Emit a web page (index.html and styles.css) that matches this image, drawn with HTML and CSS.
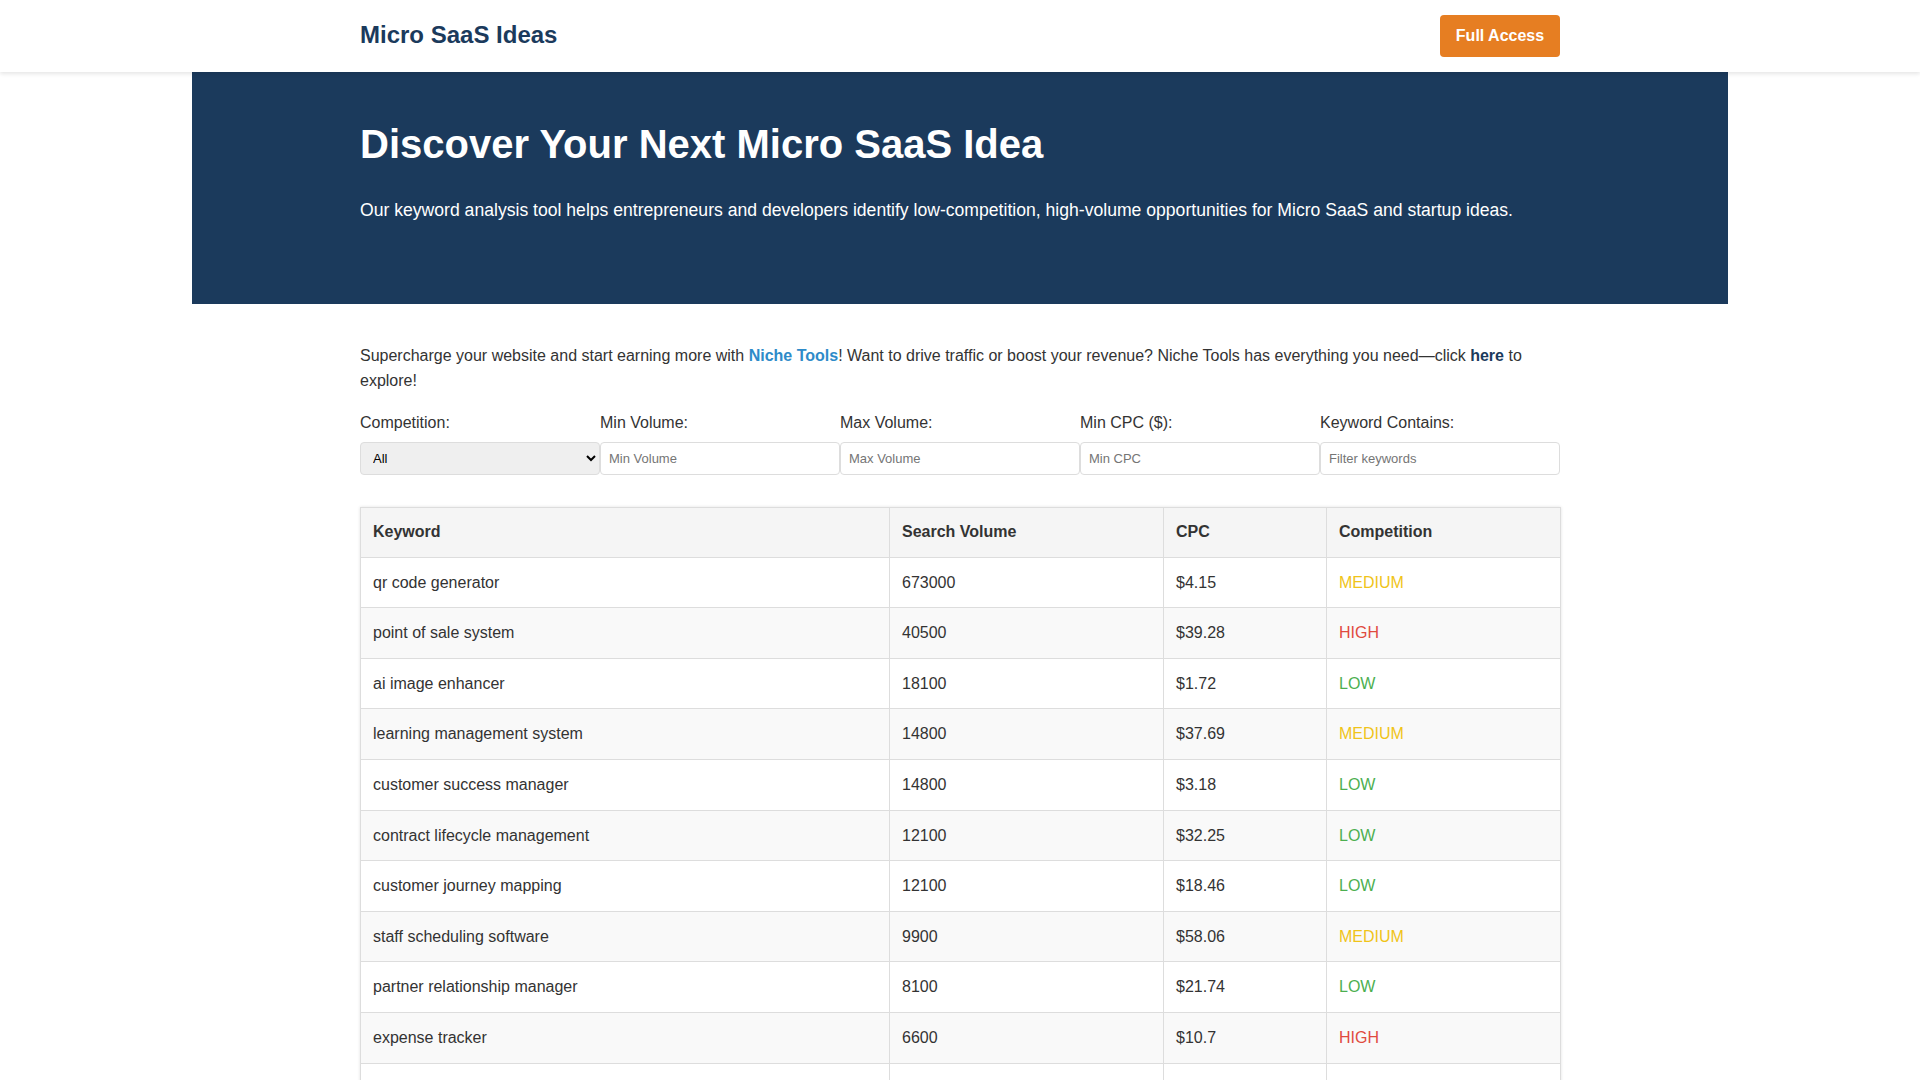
FILE: index.html
```html
<!DOCTYPE html>
<html lang="en">
<head>
<meta charset="utf-8">
<title>Micro SaaS Ideas</title>
<link rel="stylesheet" href="styles.css">
</head>
<body>
<header class="site-header">
  <div class="container header-inner">
    <div class="logo">Micro SaaS Ideas</div>
    <a class="btn-access" href="#">Full Access</a>
  </div>
</header>
<section class="hero">
  <div class="container">
    <h1 class="hero-title">Discover Your Next Micro SaaS Idea</h1>
    <p class="hero-text">Our keyword analysis tool helps entrepreneurs and developers identify low-competition, high-volume opportunities for Micro SaaS and startup ideas.</p>
  </div>
</section>
<main class="container main">
  <p class="promo">Supercharge your website and start earning more with <a class="link-niche" href="#">Niche Tools</a>! Want to drive traffic or boost your revenue? Niche Tools has everything you need—click <a class="link-here" href="#">here</a> to explore!</p>
  <div class="filters">
    <div class="filter">
      <label class="filter-label">Competition:</label>
      <select class="filter-control filter-select"><option>All</option></select>
    </div>
    <div class="filter">
      <label class="filter-label">Min Volume:</label>
      <input class="filter-control" type="text" placeholder="Min Volume">
    </div>
    <div class="filter">
      <label class="filter-label">Max Volume:</label>
      <input class="filter-control" type="text" placeholder="Max Volume">
    </div>
    <div class="filter">
      <label class="filter-label">Min CPC ($):</label>
      <input class="filter-control" type="text" placeholder="Min CPC">
    </div>
    <div class="filter">
      <label class="filter-label">Keyword Contains:</label>
      <input class="filter-control" type="text" placeholder="Filter keywords">
    </div>
  </div>
  <table class="kw-table">
    <colgroup>
      <col class="col-kw"><col class="col-vol"><col class="col-cpc"><col class="col-comp">
    </colgroup>
    <thead>
      <tr><th>Keyword</th><th>Search Volume</th><th>CPC</th><th>Competition</th></tr>
    </thead>
    <tbody>
      <tr><td>qr code generator</td><td>673000</td><td>$4.15</td><td class="medium">MEDIUM</td></tr>
      <tr><td>point of sale system</td><td>40500</td><td>$39.28</td><td class="high">HIGH</td></tr>
      <tr><td>ai image enhancer</td><td>18100</td><td>$1.72</td><td class="low">LOW</td></tr>
      <tr><td>learning management system</td><td>14800</td><td>$37.69</td><td class="medium">MEDIUM</td></tr>
      <tr><td>customer success manager</td><td>14800</td><td>$3.18</td><td class="low">LOW</td></tr>
      <tr><td>contract lifecycle management</td><td>12100</td><td>$32.25</td><td class="low">LOW</td></tr>
      <tr><td>customer journey mapping</td><td>12100</td><td>$18.46</td><td class="low">LOW</td></tr>
      <tr><td>staff scheduling software</td><td>9900</td><td>$58.06</td><td class="medium">MEDIUM</td></tr>
      <tr><td>partner relationship manager</td><td>8100</td><td>$21.74</td><td class="low">LOW</td></tr>
      <tr><td>expense tracker</td><td>6600</td><td>$10.7</td><td class="high">HIGH</td></tr>
      <tr><td>employee onboarding software</td><td>5400</td><td>$14.92</td><td class="low">LOW</td></tr>
      <tr><td>invoice generator</td><td>4400</td><td>$6.35</td><td class="medium">MEDIUM</td></tr>
    </tbody>
  </table>
</main>
</body>
</html>
```

FILE: styles.css
```css
* {
  box-sizing: border-box;
}

body {
  margin: 0;
  font-family: "Liberation Sans", Arial, Helvetica, sans-serif;
  color: #333;
  background: #fff;
}

.container {
  width: 1200px;
  margin: 0 auto;
}

.site-header {
  background: #fff;
  padding: 15px 0;
  box-shadow: 0 2px 4px rgba(0, 0, 0, 0.1);
  position: relative;
  z-index: 1;
}

.header-inner {
  display: flex;
  align-items: center;
  justify-content: space-between;
}

.logo {
  font-size: 24px;
  line-height: 28px;
  font-weight: bold;
  color: #1b3a5c;
  margin-top: -2px;
}

.btn-access {
  display: block;
  width: 120px;
  height: 42px;
  line-height: 42px;
  text-align: center;
  background: #e67e22;
  color: #fff;
  font-weight: bold;
  font-size: 16px;
  text-decoration: none;
  border-radius: 4px;
}

.hero {
  width: 1536px;
  margin: 0 auto;
  background: #1b3a5c;
  color: #fff;
  padding: 49px 0 84px;
}

.hero-title {
  margin: 0;
  font-size: 40px;
  line-height: 46px;
  font-weight: bold;
}

.hero-text {
  margin: 33px 0 0;
  font-size: 17.6px;
  line-height: 20px;
}

.main {
  padding-top: 39px;
}

.promo {
  margin: 0;
  font-size: 16px;
  line-height: 25px;
}

.link-niche {
  color: #2e8bc9;
  font-weight: bold;
  text-decoration: none;
}

.link-here {
  color: #1b3a5c;
  font-weight: bold;
  text-decoration: none;
}

.filters {
  display: grid;
  grid-template-columns: repeat(5, 1fr);
  margin-top: 21px;
}

.filter {
  display: flex;
  flex-direction: column;
}

.filter-label {
  font-size: 16px;
  line-height: 18px;
  margin-bottom: 10px;
}

.filter-control {
  width: 100%;
  height: 33px;
  padding: 8px;
  font-family: "Liberation Sans", Arial, Helvetica, sans-serif;
  font-size: 13px;
  border: 1px solid #ddd;
  border-radius: 4px;
  background: #fff;
  color: #333;
}

.filter-control::placeholder {
  color: #757575;
}

.filter-select {
  background: #efefef;
  color: #000;
  padding: 0 4px 0 8px;
}

.kw-table {
  width: 100%;
  margin-top: 32px;
  border-collapse: collapse;
  table-layout: fixed;
  border: 1px solid #ddd;
  box-shadow: 0 0 3px rgba(0, 0, 0, 0.12);
  font-size: 16px;
}

.col-kw { width: 529px; }
.col-vol { width: 274px; }
.col-cpc { width: 163px; }
.col-comp { width: 234px; }

.kw-table th,
.kw-table td {
  border: 1px solid #ddd;
  padding: 12px;
  line-height: 25.6px;
  text-align: left;
}

.kw-table th {
  background: #f5f5f5;
  font-weight: bold;
  color: #333;
  line-height: 24.6px;
}

.kw-table tbody tr:nth-child(even) {
  background: #f9f9f9;
}

.medium { color: #f0c419; }
.high { color: #e04a3f; }
.low { color: #4caf50; }
```
